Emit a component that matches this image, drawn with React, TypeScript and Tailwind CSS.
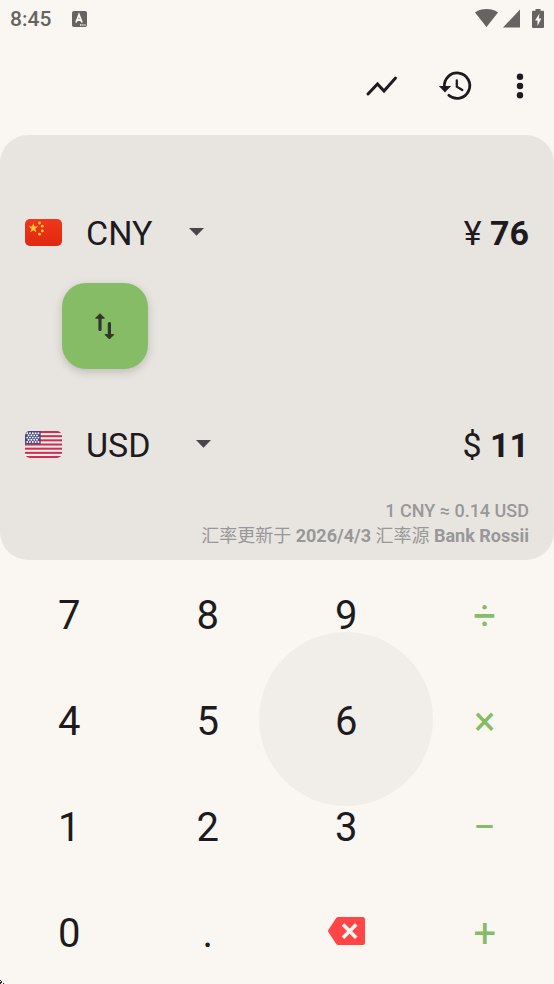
import { useState } from 'react';
import type { ReactNode } from 'react';

const KEYS = [
  ['7', '8', '9', '÷'],
  ['4', '5', '6', '×'],
  ['1', '2', '3', '−'],
  ['0', '.', 'del', '+'],
];

const OPERATORS = ['÷', '×', '−', '+'];

function StatusBar() {
  return (
    <div className="flex h-[38px] items-center justify-between px-[10px] text-[#656462]">
      <div className="flex items-center gap-[21px]">
        <span className="text-[21px] leading-6 font-medium">8:45</span>
        <svg className="h-4 w-[15px]" viewBox="0 0 15 16">
          <rect width="15" height="16" rx="2" fill="currentColor" />
          <path
            d="M4 11.5 7 3.8 10 11.5M5.1 9h3.8"
            fill="none"
            stroke="#faf7f2"
            strokeWidth="1.8"
          />
          <path d="M8 14h1.4M10.3 14h1.2M12.4 14h1.2" stroke="#faf7f2" strokeWidth="1.4" />
        </svg>
      </div>
      <div className="flex items-center gap-[5px]">
        <svg className="h-5 w-[23px]" viewBox="0 0 23 20" fill="currentColor">
          <path d="M0 3.5C3.5.9 7.5 0 11.5 0s8 .9 11.5 3.5L11.5 18z" />
        </svg>
        <svg className="h-5 w-[17px]" viewBox="0 0 17 20" fill="currentColor">
          <path d="M17 .5v18H0z" />
        </svg>
        <svg className="ml-[7px] h-5 w-3" viewBox="0 0 12 20">
          <path
            d="M3.5 0h5v1.8H11a1 1 0 0 1 1 1V18a1 1 0 0 1-1 1H1a1 1 0 0 1-1-1V2.8a1 1 0 0 1 1-1h2.5z"
            fill="currentColor"
          />
          <path d="M7.5 4.5 3 11.5h2.5V17L9.3 9.5H6.8z" fill="#faf7f2" />
        </svg>
      </div>
    </div>
  );
}

function IconButton({ label, children }: { label: string; children: ReactNode }) {
  return (
    <button
      type="button"
      aria-label={label}
      className="flex h-12 w-9 items-center justify-center text-[#1d1b20]"
    >
      {children}
    </button>
  );
}

function Toolbar() {
  return (
    <header className="flex h-[97px] items-center justify-end gap-[38px] pr-4 pb-px">
      <IconButton label="走势">
        <svg className="size-9 shrink-0" viewBox="0 0 36 36" fill="none">
          <path
            d="M4 26 13.5 16l6.500 7L31.500 10"
            stroke="currentColor"
            strokeWidth="3"
            strokeLinecap="round"
          />
        </svg>
      </IconButton>
      <IconButton label="历史记录">
        <svg className="size-9 shrink-0" viewBox="0 0 36 36" fill="none">
          <path
            d="M6.500 19.500A12.700 12.700 0 1 1 10.800 27.300"
            stroke="currentColor"
            strokeWidth="2.800"
            strokeLinecap="round"
          />
          <path d="M.800 18h12.300L7 24.500z" fill="currentColor" />
          <path
            d="M18.800 12.500v6.200l5.500 3.300"
            stroke="currentColor"
            strokeWidth="2.300"
            strokeLinecap="round"
          />
        </svg>
      </IconButton>
      <div className="-ml-[10px]">
        <IconButton label="更多">
          <svg className="size-9 shrink-0" viewBox="0 0 36 36" fill="currentColor">
            <circle cx="18" cy="8.700" r="3.200" />
            <circle cx="18" cy="18" r="3.200" />
            <circle cx="18" cy="27.300" r="3.200" />
          </svg>
        </IconButton>
      </div>
    </header>
  );
}

function ChinaFlag() {
  return (
    <svg className="h-[27px] w-[37px] shrink-0" viewBox="0 0 37 27">
      <defs>
        <linearGradient id="cnRed" x1="0" y1="0" x2="0" y2="1">
          <stop offset="0%" stopColor="#f1361d" />
          <stop offset="100%" stopColor="#df2910" />
        </linearGradient>
      </defs>
      <rect width="37" height="27" rx="5" fill="url(#cnRed)" />
      <g fill="#ffd02f">
        <path d="M8.300 4.200l1.200 3.300 3.500.1-2.800 2.200 1 3.400-2.900-2-2.900 2 1-3.400-2.800-2.200 3.500-.1z" />
        <circle cx="14.500" cy="4" r="1.400" />
        <circle cx="17.300" cy="7.200" r="1.400" />
        <circle cx="17.300" cy="11.900" r="1.400" />
        <circle cx="14.500" cy="15.200" r="1.400" />
      </g>
    </svg>
  );
}

function UsaFlag() {
  return (
    <svg className="h-[27px] w-[37px] shrink-0" viewBox="0 0 37 27">
      <clipPath id="usClip">
        <rect width="37" height="27" rx="5" />
      </clipPath>
      <g clipPath="url(#usClip)">
        <rect width="37" height="27" fill="#f6f1f0" />
        {[0, 1, 2, 3, 4, 5, 6].map(i => (
          <rect key={i} y={i * 4.16} width="37" height="2.080" fill="#cf2f4c" />
        ))}
        <rect width="15.700" height="12.900" fill="#46467f" />
        <g fill="#ffffff">
          {[0, 1, 2, 3, 4].map(row =>
            [0, 1, 2, 3, 4].slice(row % 2).map(col => (
              <circle
                key={`${row}-${col}`}
                cx={(row % 2 ? 0.8 : 2.2) + col * 2.8}
                cy={2.2 + row * 2.2}
                r="0.950"
              />
            )),
          )}
        </g>
      </g>
    </svg>
  );
}

interface CurrencyRowProps {
  flag: ReactNode;
  code: string;
  label: string;
  symbol: string;
  amount: string;
  onChange: (code: string) => void;
}

function CurrencyRow({ flag, code, label, symbol, amount, onChange }: CurrencyRowProps) {
  return (
    <div className="flex h-14 items-center justify-between text-[34px] leading-10 text-[#1d1b20]">
      <div className="flex items-center">
        {flag}
        <label className="ml-6 flex items-center">
          <select
            aria-label={label}
            value={code}
            onChange={e => onChange(e.target.value)}
            className={`appearance-none bg-transparent pt-px outline-none ${
              code === 'CNY' ? 'w-[103px]' : 'w-[110px]'
            }`}
          >
            <option>CNY</option>
            <option>USD</option>
          </select>
          <svg className="h-2 w-[15px] shrink-0" viewBox="0 0 15 8" fill="#49454f">
            <path d="M0 0h15L7.500 7.700z" />
          </svg>
        </label>
      </div>
      <p className="pt-px">
        {symbol} <span className="font-bold">{amount}</span>
      </p>
    </div>
  );
}

function Key({ value, pressed }: { value: string; pressed: boolean }) {
  const isOperator = OPERATORS.includes(value);

  return (
    <button
      type="button"
      aria-label={value === 'del' ? '删除' : undefined}
      className={`relative flex h-[106px] items-center justify-center text-[40px] leading-[48px] ${
        isOperator ? 'text-[#86bc66]' : 'text-[#1d1b20]'
      }`}
    >
      {pressed && (
        <span className="absolute top-1/2 left-1/2 size-[174px] -translate-x-1/2 -translate-y-1/2 rounded-full bg-[#f1eee9]" />
      )}
      {value === 'del' ? (
        <svg className="h-7 w-[37px]" viewBox="0 0 37 28">
          <path
            d="M10.500 0H34.500A2.500 2.500 0 0 1 37 2.500V25.500A2.500 2.500 0 0 1 34.500 28H10.500A3 3 0 0 1 8 26.700L.5 15.200a2 2 0 0 1 0-2.400L8 1.300A3 3 0 0 1 10.500 0z"
            fill="#ff4545"
          />
          <path d="M15 7.500l13.200 13.200M28.200 7.500 15 20.700" stroke="#faf7f2" strokeWidth="3.600" />
        </svg>
      ) : (
        <span className="relative pt-1.5">{value}</span>
      )}
    </button>
  );
}

export default function App() {
  const [from, setFrom] = useState('CNY');
  const [to, setTo] = useState('USD');

  const swap = () => {
    setFrom(to);
    setTo(from);
  };

  const flagFor = (code: string) => (code === 'CNY' ? <ChinaFlag /> : <UsaFlag />);
  const symbolFor = (code: string) => (code === 'CNY' ? '¥' : '$');

  return (
    <div className="relative min-h-screen overflow-hidden bg-[#faf7f2] font-['Roboto','Noto_Sans_CJK_SC',sans-serif]">
      <StatusBar />
      <Toolbar />

      <main>
        <section className="rounded-[28px] bg-[#e8e5e0] px-[25px] pt-[69px] pb-3">
          <CurrencyRow
            flag={flagFor(from)}
            code={from}
            label="源货币"
            symbol={symbolFor(from)}
            amount="76"
            onChange={setFrom}
          />
          <button
            type="button"
            aria-label="交换货币"
            onClick={swap}
            className="mt-[23px] ml-[37px] flex size-[86px] items-center justify-center rounded-3xl bg-[#86bc66] text-[#33332f] shadow-[0_3px_10px_rgba(0,0,0,0.18)]"
          >
            <svg className="h-7 w-5" viewBox="0 0 20 28" fill="none">
              <path
                d="M5 6.500v11M14.400 11.500v11"
                stroke="currentColor"
                strokeWidth="3.200"
                strokeLinecap="round"
              />
              <path
                d="M5 1.700 9.400 6.200H.6zM14.400 27 18.800 22.600h-8.800z"
                fill="currentColor"
                stroke="currentColor"
                strokeLinejoin="round"
              />
            </svg>
          </button>
          <div className="mt-[47px]">
            <CurrencyRow
              flag={flagFor(to)}
              code={to}
              label="目标货币"
              symbol={symbolFor(to)}
              amount="11"
              onChange={setTo}
            />
          </div>
          <div className="mt-[26px] text-right text-lg leading-[25px] text-[#98979a]">
            <p className="font-medium">1 CNY ≈ 0.14 USD</p>
            <p>
              汇率更新于 <b>2026/4/3</b> 汇率源 <b>Bank Rossii</b>
            </p>
          </div>
        </section>

        <div className="grid grid-cols-4">
          {KEYS.flat().map(key => (
            <Key key={key} value={key} pressed={key === '6'} />
          ))}
        </div>
      </main>

      <svg className="absolute bottom-0 left-0 size-1" viewBox="0 0 4 4">
        <path d="M0 0h1v1H0zM0 2h1v2H0zM1 1h1v2H1zM3 3h1v1H3z" fill="#222222" />
      </svg>
    </div>
  );
}
